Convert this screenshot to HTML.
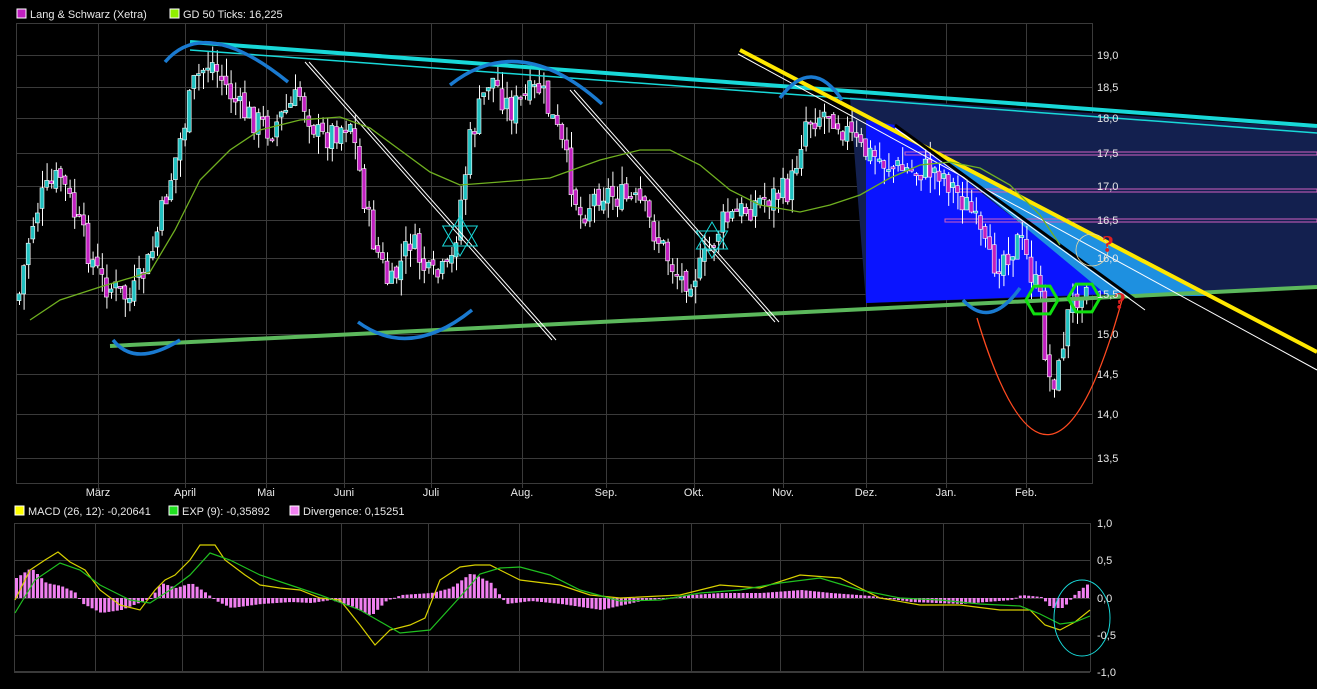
<!DOCTYPE html>
<html><head><meta charset="utf-8"><style>
html,body{margin:0;padding:0;background:#000;width:1317px;height:689px;overflow:hidden}
svg{display:block}
text{font-family:"Liberation Sans",sans-serif;font-size:11px;fill:#e8e8e8}
</style></head><body>
<svg id="s" width="1317" height="689" xmlns="http://www.w3.org/2000/svg">
<rect width="1317" height="689" fill="#000"/>
<rect x="17" y="9" width="9" height="9" fill="#c020c0" stroke="#fff" stroke-width="1"/>
<text x="30" y="18">Lang &amp; Schwarz (Xetra)</text>
<rect x="170" y="9" width="9" height="9" fill="#90f000" stroke="#fff" stroke-width="1"/>
<text x="183" y="18">GD 50 Ticks: 16,225</text>
<rect x="15" y="506" width="9" height="9" fill="#ffff00" stroke="#fff" stroke-width="1"/>
<text x="28" y="515">MACD (26, 12): -0,20641</text>
<rect x="169" y="506" width="9" height="9" fill="#20e020" stroke="#fff" stroke-width="1"/>
<text x="182" y="515">EXP (9): -0,35892</text>
<rect x="290" y="506" width="9" height="9" fill="#f080f0" stroke="#fff" stroke-width="1"/>
<text x="303" y="515">Divergence: 0,15251</text>
<g id="grid" stroke="#3a3a3a" stroke-width="1" fill="none"></g>
<g id="over1"></g>
<g id="candles"></g>
<g id="over2"></g>
<g id="macd"></g>
<g id="labels"></g>
</svg>
<script>
const NS="http://www.w3.org/2000/svg";
function el(p,t,a){const e=document.createElementNS(NS,t);for(const k in a)e.setAttribute(k,a[k]);p.appendChild(e);return e;}
const g=document.getElementById('grid'),o1=document.getElementById('over1'),cg=document.getElementById('candles'),o2=document.getElementById('over2'),mg=document.getElementById('macd'),lg=document.getElementById('labels');
el(g,'rect',{x:16.5,y:23.5,width:1076,height:460});
const months=[["März",98],["April",185],["Mai",266],["Juni",344],["Juli",431],["Aug.",522],["Sep.",606],["Okt.",694],["Nov.",783],["Dez.",866],["Jan.",946],["Feb.",1026]];
months.forEach(m=>{el(g,'line',{x1:m[1]+.5,y1:23,x2:m[1]+.5,y2:483});el(g,'line',{x1:m[1]+.5,y1:483,x2:m[1]+.5,y2:488});
 const t=el(lg,'text',{x:m[1],y:496,'text-anchor':'middle'});t.textContent=m[0];
 el(g,'line',{x1:m[1]-2.5,y1:523,x2:m[1]-2.5,y2:672});});
const py=[["19,0",55],["18,5",87],["18,0",118],["17,5",153],["17,0",186],["16,5",220],["16,0",258],["15,5",294],["15,0",334],["14,5",374],["14,0",414],["13,5",458]];
py.forEach(p=>{el(g,'line',{x1:16,y1:p[1]+.5,x2:1092,y2:p[1]+.5});const t=el(lg,'text',{x:1097,y:p[1]+4});t.textContent=p[0];});
el(g,'rect',{x:14.5,y:523.5,width:1076,height:148});
[["1,0",523],["0,5",560],["0,0",598],["-0,5",635],["-1,0",672]].forEach(p=>{el(g,'line',{x1:14,y1:p[1]+.5,x2:1090,y2:p[1]+.5});const t=el(lg,'text',{x:1097,y:p[1]+4});t.textContent=p[0];});

el(o1,'polygon',{points:"850,97 1317,128 1317,288 866,303",fill:"#13204f"});
el(o1,'polygon',{points:"866,120 895,125 1110,294 866,303",fill:"#0a14ff"});
el(o1,'polygon',{points:"945,157 1210,296 1108,296 945,161",fill:"#1e90e0"});
el(o1,'rect',{x:905,y:152,width:412,height:3,fill:"none",stroke:"#d060c0"});
el(o1,'rect',{x:957,y:189,width:360,height:3,fill:"none",stroke:"#d060c0"});
el(o1,'rect',{x:945,y:219,width:372,height:3,fill:"none",stroke:"#d060c0"});

let seed=7;function rnd(){seed=(seed*9301+49297)%233280;return seed/233280;}
const pts=[[18,300],[30,230],[40,200],[60,175],[80,230],[100,280],[130,300],[150,260],[170,180],[195,80],[210,60],[240,110],[270,130],[300,95],[320,140],[350,120],[370,230],[390,290],[410,240],[430,280],[450,270],[470,140],[490,75],[510,110],[540,88],[560,140],[580,215],[600,190],[640,205],[680,280],[700,270],[720,225],[760,200],[790,190],[805,120],[830,110],[860,150],[900,170],[940,170],[970,210],[990,265],[1020,240],[1040,300],[1048,380],[1058,375],[1066,320],[1085,275]];
function interp(x){for(let i=0;i<pts.length-1;i++){if(x>=pts[i][0]&&x<=pts[i+1][0]){const t=(x-pts[i][0])/(pts[i+1][0]-pts[i][0]);return pts[i][1]+t*(pts[i+1][1]-pts[i][1]);}}return pts[pts.length-1][1];}
let prev=interp(18);
for(let x=19;x<=1088;x+=4.6){
 const c=interp(x)+(rnd()-.5)*30;const op=prev+(rnd()-.5)*10;prev=c;
 const hi=Math.min(c,op)-rnd()*18,lo=Math.max(c,op)+rnd()*18;
 el(cg,'line',{x1:x+.5,y1:hi,x2:x+.5,y2:lo,stroke:"#fff","stroke-width":1});
 const up=c<op;el(cg,'rect',{x:x-2,y:Math.min(c,op),width:4,height:Math.max(2,Math.abs(c-op)),fill:up?"#20c0c0":"#c020c0",stroke:"#fff","stroke-width":.6});
}

function ln(p,a){el(o2,'line',Object.assign({x1:p[0],y1:p[1],x2:p[2],y2:p[3]},a));}
ln([190,42,1317,126],{stroke:"#18d8d8","stroke-width":4});
ln([190,50,1317,133],{stroke:"#18d8d8","stroke-width":1.5});
ln([110,346,1317,287],{stroke:"#5cb85c","stroke-width":4});
ln([305,62,552,340],{stroke:"#fff","stroke-width":1});ln([309,62,556,340],{stroke:"#fff","stroke-width":1});
ln([570,90,775,322],{stroke:"#fff","stroke-width":1});ln([574,90,779,322],{stroke:"#fff","stroke-width":1});
ln([738,54,1317,370],{stroke:"#fff","stroke-width":1});
ln([740,50,1317,352],{stroke:"#ffe800","stroke-width":4});
ln([895,125,1145,307],{stroke:"#000","stroke-width":3});
ln([895,128,1145,310],{stroke:"#fff","stroke-width":1});
el(o2,'polyline',{points:"30,320 60,300 100,287 150,272 175,230 200,180 230,150 260,130 300,120 340,117 370,128 400,150 430,172 460,185 500,182 550,178 600,160 640,150 670,150 700,165 730,190 760,205 800,212 830,205 860,195 890,178 920,165 950,162 980,168 1010,185 1040,215 1060,245",fill:"none",stroke:"#70b020","stroke-width":1.3});
const A={fill:"none",stroke:"#1a7ad0","stroke-width":3.5};
el(o2,'path',Object.assign({d:"M165,62 Q205,15 288,82"},A));
el(o2,'path',Object.assign({d:"M113,340 Q135,368 180,340"},A));
el(o2,'path',Object.assign({d:"M358,322 Q410,360 472,310"},A));
el(o2,'path',Object.assign({d:"M450,85 Q520,30 602,104"},A));
el(o2,'path',Object.assign({d:"M780,98 Q812,55 842,100"},A));
el(o2,'path',Object.assign({d:"M963,300 Q990,330 1020,288"},A));
el(o2,'path',{d:"M977,318 Q1050,560 1122,300",fill:"none",stroke:"#ff4a20","stroke-width":1.3});
function hex(cx,cy,r){let s="";for(let i=0;i<6;i++){const a=Math.PI/3*i;s+=(cx+r*Math.cos(a))+","+(cy+r*Math.sin(a))+" ";}el(o2,'polygon',{points:s,fill:"none",stroke:"#10e010","stroke-width":3});}
hex(1042,300,16);hex(1084,298,16);
el(o2,'circle',{cx:1092,cy:250,r:16,fill:"none",stroke:"#e8d8a0","stroke-width":.8});
function star(cx,cy,r){const p1=[],p2=[];for(let i=0;i<3;i++){const a=-Math.PI/2+i*2*Math.PI/3;p1.push((cx+r*Math.cos(a))+","+(cy+r*Math.sin(a)));const b=Math.PI/2+i*2*Math.PI/3;p2.push((cx+r*Math.cos(b))+","+(cy+r*Math.sin(b)));}
el(o2,'polygon',{points:p1.join(" "),fill:"none",stroke:"#18d8d8","stroke-width":1});el(o2,'polygon',{points:p2.join(" "),fill:"none",stroke:"#18d8d8","stroke-width":1});}
star(460,236,20);star(712,240,18);
const q1=el(o2,'text',{x:1102,y:252,style:"font-family:'Liberation Serif',serif;font-size:24px;font-weight:bold;fill:#e02020"});q1.textContent="?";
const q2=el(o2,'text',{x:1114,y:309,style:"font-family:'Liberation Serif',serif;font-size:24px;font-weight:bold;fill:#e02020"});q2.textContent="?";

const Z=598;
const hv=[[15,20],[30,30],[45,15],[60,12],[75,5],[80,-5],[100,-15],[120,-12],[150,0],[160,15],[175,10],[190,15],[205,5],[215,-3],[230,-10],[260,-6],[290,-4],[310,-5],[330,-2],[350,-8],[370,-18],[385,-3],[400,3],[430,5],[450,10],[470,25],[490,15],[505,-6],[530,-3],[560,-6],[600,-12],[640,-3],[690,3],[720,5],[760,5],[800,8],[830,5],[870,2],[910,-4],[960,-6],[1010,-2],[1020,3],[1040,1],[1050,-10],[1062,-10],[1075,5],[1088,15]];
function hAt(x){for(let i=0;i<hv.length-1;i++){if(x>=hv[i][0]&&x<=hv[i+1][0]){const t=(x-hv[i][0])/(hv[i+1][0]-hv[i][0]);return hv[i][1]+t*(hv[i+1][1]-hv[i][1]);}}return 0;}
for(let x=15;x<1088;x+=4.2){const h=hAt(x);el(mg,'rect',{x:x,y:h>0?Z-h:Z,width:3,height:Math.max(1,Math.abs(h)),fill:"#f080f0"});}
el(mg,'polyline',{points:"15,600 30,570 45,560 58,552 70,562 85,570 100,590 120,605 140,610 155,590 165,580 175,575 190,560 200,545 215,545 225,560 245,575 260,585 280,588 300,590 320,598 340,600 360,625 375,645 390,630 410,625 425,618 440,580 460,567 475,565 490,565 500,570 520,580 560,585 590,595 620,598 680,595 720,585 760,588 800,575 840,578 880,598 920,605 960,605 1000,610 1030,610 1045,625 1060,630 1075,622 1090,610",fill:"none",stroke:"#d8d000","stroke-width":1.2});
el(mg,'polyline',{points:"15,613 35,580 60,563 80,570 100,585 130,600 150,603 170,590 190,575 210,553 230,560 260,575 290,585 320,595 360,610 400,633 430,630 460,597 480,574 500,568 520,567 550,575 580,590 620,601 660,600 700,593 740,590 780,583 820,578 860,590 900,598 940,600 980,604 1020,606 1040,614 1060,624 1075,622 1090,616",fill:"none",stroke:"#20c020","stroke-width":1.2});
el(mg,'ellipse',{cx:1082,cy:618,rx:28,ry:38,fill:"none",stroke:"#18d8d8","stroke-width":1});
</script>
</body></html>
